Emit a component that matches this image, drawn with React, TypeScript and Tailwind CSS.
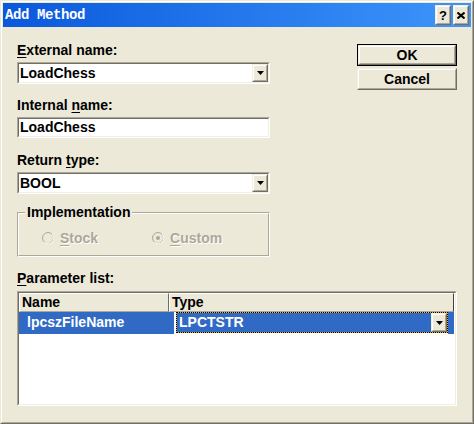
import React from "react";

function Sunken({ className = "", innerClassName = "", children }: { className?: string; innerClassName?: string; children?: React.ReactNode }) {
  return (
    <div className={`border border-t-[#aca899] border-l-[#aca899] border-r-white border-b-white ${className}`}>
      <div className={`h-full w-full border border-t-[#716f64] border-l-[#716f64] border-r-[#f1efe2] border-b-[#f1efe2] ${innerClassName}`}>
        {children}
      </div>
    </div>
  );
}

function Raised({ className = "", innerClassName = "", children }: { className?: string; innerClassName?: string; children?: React.ReactNode }) {
  return (
    <div className={`border border-t-[#f1efe2] border-l-[#f1efe2] border-r-[#716f64] border-b-[#716f64] bg-[#ece9d8] ${className}`}>
      <div className={`h-full w-full border border-t-white border-l-white border-r-[#aca899] border-b-[#aca899] ${innerClassName}`}>
        {children}
      </div>
    </div>
  );
}

function Arrow() {
  return (
    <svg width="7" height="4" viewBox="0 0 7 4">
      <polygon points="0,0 7,0 3.5,4" fill="#000" />
    </svg>
  );
}

function DropBtn({ className = "" }: { className?: string }) {
  return (
    <Raised className={`w-[16px] h-full shrink-0 ${className}`} innerClassName="flex items-center justify-center">
      <Arrow />
    </Raised>
  );
}

function Label({ children, className = "" }: { children: React.ReactNode; className?: string }) {
  return <div className={`h-[16px] leading-[16px] text-[14px] font-bold whitespace-nowrap ${className}`}>{children}</div>;
}

function Combo({ value, className = "" }: { value: string; className?: string }) {
  return (
    <Sunken className={`h-[22px] ${className}`} innerClassName="flex bg-white">
      <div className="flex-1 pl-[1px] text-[14px] font-bold leading-[18px]">{value}</div>
      <DropBtn />
    </Sunken>
  );
}

function Radio({ checked }: { checked?: boolean }) {
  return (
    <svg width="12" height="12" viewBox="0 0 12 12" className="shrink-0">
      <circle cx="6" cy="6" r="5.5" fill="#ece9d8" stroke="#aca899" />
      <path d="M10.2 2.2 A5.5 5.5 0 0 1 2.2 10.2" fill="none" stroke="#ffffff" />
      {checked && <circle cx="6" cy="6" r="2" fill="#aca899" />}
    </svg>
  );
}

function U({ children }: { children: React.ReactNode }) {
  return <span className="underline underline-offset-[2px]">{children}</span>;
}

export default function App() {
  return (
    <div className="w-[474px] h-[424px] [font-family:'Liberation_Sans',Arial,sans-serif] text-black">
      <div className="w-full h-full border border-t-[#ece9d8] border-l-[#ece9d8] border-r-[#716f64] border-b-[#716f64]">
        <div className="w-full h-full border border-t-white border-l-white border-r-[#aca899] border-b-[#aca899] bg-[#ece9d8] p-px flex flex-col">
          {/* Title bar */}
          <div className="h-[24px] shrink-0 flex items-center bg-linear-to-r from-[#0a58dc] to-[#3d95fb] pl-[2px] pr-[2px]">
            <div className="flex-1 text-white font-bold text-[14px] tracking-[-0.4px] [font-family:'Liberation_Mono',monospace] leading-[16px]">
              Add Method
            </div>
            <div className="flex gap-[2px] items-center">
              <Raised className="w-[16px] h-[20px]" innerClassName="flex items-center justify-center">
                <span className="text-[13px] font-bold leading-none">?</span>
              </Raised>
              <Raised className="w-[16px] h-[20px]" innerClassName="flex items-center justify-center">
                <svg width="8" height="7" viewBox="0 0 8 7">
                  <path d="M0.5 0.5 L7.5 6.5 M7.5 0.5 L0.5 6.5" stroke="#000" strokeWidth="2" />
                </svg>
              </Raised>
            </div>
          </div>

          {/* Content */}
          <div className="flex-1 px-[14px] flex flex-col">
            <div className="flex justify-between">
              <div className="w-[253px] pt-[15px] flex flex-col">
                <Label>
                  <U>E</U>xternal name:
                </Label>
                <Combo value="LoadChess" className="mt-[4px]" />
                <Label className="mt-[13px]">
                  Internal <U>n</U>ame:
                </Label>
                <Sunken className="mt-[4px] h-[21px]" innerClassName="bg-white">
                  <div className="pl-[1px] text-[14px] font-bold leading-[17px]">LoadChess</div>
                </Sunken>
                <Label className="mt-[14px]">
                  Return <U>t</U>ype:
                </Label>
                <Combo value="BOOL" className="mt-[4px]" />
                {/* Group box */}
                <div className="relative mt-[18px] h-[45px] border border-t-[#aca899] border-l-[#aca899] border-r-white border-b-white">
                  <div className="h-full border border-t-white border-l-white border-r-[#aca899] border-b-[#aca899] flex items-start pt-[16px] pl-[23px]">
                    <div className="w-[110px] flex items-center gap-[6px]">
                      <Radio />
                      <span className="text-[14px] font-bold leading-[16px] text-[#aca899] [text-shadow:1px_1px_0_#ffffff]">
                        <U>S</U>tock
                      </span>
                    </div>
                    <div className="flex items-center gap-[6px]">
                      <Radio checked />
                      <span className="text-[14px] font-bold leading-[16px] text-[#aca899] [text-shadow:1px_1px_0_#ffffff]">
                        <U>C</U>ustom
                      </span>
                    </div>
                  </div>
                  <div className="absolute left-[7px] top-[-9px] px-[2px] bg-[#ece9d8] h-[16px] leading-[16px] text-[14px] font-bold">
                    Implementation
                  </div>
                </div>
              </div>

              <div className="w-[100px] pt-[17px] flex flex-col gap-[2px]">
                <div className="h-[22px] border border-black">
                  <Raised className="h-full" innerClassName="flex items-center justify-center">
                    <span className="text-[14px] font-bold leading-none">OK</span>
                  </Raised>
                </div>
                <Raised className="h-[22px]" innerClassName="flex items-center justify-center">
                  <span className="text-[14px] font-bold leading-none">Cancel</span>
                </Raised>
              </div>
            </div>

            <Label className="mt-[13px]">
              <U>P</U>arameter list:
            </Label>
            <Sunken className="mt-[5px] h-[115px]" innerClassName="bg-white flex flex-col">
              {/* Header */}
              <div className="h-[19px] flex shrink-0">
                <div className="w-[150px] border border-t-white border-l-white border-r-[#716f64] border-b-[#aca899] bg-[#ece9d8] pl-[2px] text-[14px] font-bold leading-[16px]">
                  Name
                </div>
                <div className="flex-1 border border-t-white border-l-white border-r-[#404040] border-b-[#aca899] bg-[#ece9d8] pl-[2px] text-[14px] font-bold leading-[16px]">
                  Type
                </div>
                <div className="w-[1px] bg-white" />
              </div>
              {/* Row */}
              <div className="h-[22px] flex shrink-0">
                <div className="w-[155px] bg-[#316ac5] text-white pl-[8px] text-[14px] font-bold leading-[20px]">
                  lpcszFileName
                </div>
                <div className="w-[2px] bg-white" />
                <div className="w-[272px] h-[21px] bg-[#e8b040] border border-dotted border-black">
                  <div className="h-full bg-[#316ac5] flex">
                    <div className="flex-1 pl-[2px] text-white text-[14px] font-bold leading-[19px]">LPCTSTR</div>
                    <DropBtn className="h-[18px]" />
                  </div>
                </div>
                <div className="w-[6px] bg-[#316ac5]" />
                <div className="flex-1 bg-white" />
              </div>
            </Sunken>
          </div>
        </div>
      </div>
    </div>
  );
}
